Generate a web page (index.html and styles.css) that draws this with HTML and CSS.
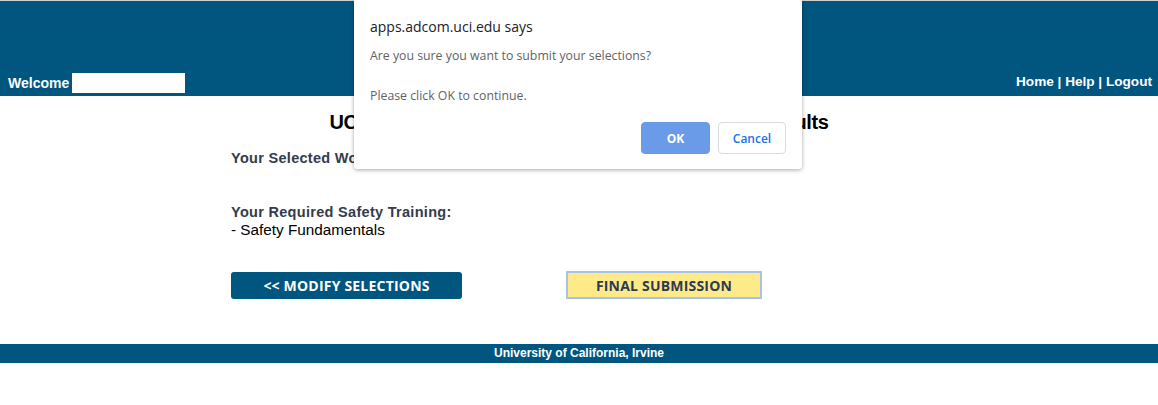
FILE: index.html
```html
<!DOCTYPE html>
<html>
<head>
<meta charset="utf-8">
<link rel="stylesheet" href="styles.css">
</head>
<body>
<div class="topline"></div>
<header class="header">
  <div class="welcome">Welcome <span class="namebox"></span></div>
  <nav class="nav">Home | Help | Logout</nav>
</header>
<main class="main">
  <h1 class="title">UCI Student Work Activity Hazard Assessment Results</h1>
  <div class="content">
    <div class="label">Your Selected Work Activities:</div>
    <div class="section">
      <div class="label">Your Required Safety Training:</div>
      <div class="item">- Safety Fundamentals</div>
    </div>
    <div class="buttons">
      <button class="btn btn-modify">&lt;&lt; MODIFY SELECTIONS</button>
      <button class="btn btn-submit">FINAL SUBMISSION</button>
    </div>
  </div>
</main>
<footer class="footer">University of California, Irvine</footer>

<div class="dialog">
  <div class="dlg-title">apps.adcom.uci.edu says</div>
  <div class="dlg-msg">Are you sure you want to submit your selections?</div>
  <div class="dlg-msg dlg-msg2">Please click OK to continue.</div>
  <div class="dlg-actions">
    <button class="dbtn dbtn-ok">OK</button>
    <button class="dbtn dbtn-cancel">Cancel</button>
  </div>
</div>
</body>
</html>
```
FILE: styles.css
```css
html, body { margin: 0; padding: 0; background: #fff; }
body { font-family: "Liberation Sans", Arial, sans-serif; position: relative; }
.topline { height: 1px; background: #d0d0d0; }
.header {
  background: #00567f;
  height: 92px;
  display: flex;
  justify-content: space-between;
  align-items: flex-end;
  padding: 0 6px 3px 8px;
  color: #fff;
  font-weight: bold;
  font-size: 14px;
}
.welcome { display: flex; align-items: center; gap: 3px; line-height: 20px; }
.namebox { display: inline-block; width: 113px; height: 20px; background: #fff; }
.nav { line-height: 20px; padding-bottom: 1px; font-size: 13.6px; }
.main { padding-top: 13px; }
.title {
  margin: 0;
  text-align: center;
  font-size: 20px;
  font-weight: bold;
  color: #000;
  line-height: 26px;
  letter-spacing: -0.4px;
}
.content { width: 696px; margin: 14px auto 0; }
.label { font-size: 14.5px; font-weight: bold; color: #343b4c; letter-spacing: 0.3px; line-height: 18px; }
.section { margin-top: 36px; }
.item { font-size: 15.3px; color: #000; line-height: 18px; }
.buttons { display: flex; gap: 104px; margin-top: 32px; align-items: center; }
.btn {
  font-family: "Open Sans", sans-serif;
  font-weight: bold;
  font-size: 14px;
  letter-spacing: 0.2px;
  border-radius: 3px;
  padding: 0;
  height: 27px;
  cursor: pointer;
}
.btn-modify { width: 231px; background: #00567f; color: #fff; border: none; }
.btn-submit { width: 196px; height: 28px; background: #ffea8a; color: #2e3a54; border: 2px solid #a9c3e6; border-radius: 0; }
.footer {
  margin-top: 45px;
  background: #00567f;
  color: #fff;
  font-size: 12px;
  font-weight: bold;
  text-align: center;
  height: 19px;
  line-height: 19px;
}
.dialog {
  position: absolute;
  left: 354px;
  top: 0;
  width: 448px;
  height: 169px;
  background: #fff;
  box-shadow: 0 1px 4px rgba(0,0,0,0.35);
  border-radius: 0 0 3px 3px;
  font-family: "Open Sans", "Noto Sans", sans-serif;
  box-sizing: border-box;
  padding: 17px 16px 0;
}
.dlg-title { font-size: 14px; color: #202124; line-height: 20px; }
.dlg-msg { font-size: 12.3px; color: #5f6368; margin-top: 10px; line-height: 17px; }
.dlg-msg2 { margin-top: 23px; }
.dlg-actions { display: flex; justify-content: flex-end; gap: 8px; margin-top: 18px; }
.dbtn { font-family: "Open Sans", sans-serif; font-size: 12px; height: 32px; border-radius: 4px; padding: 0; }
.dbtn-ok { width: 69px; background: #6a9be8; color: #fff; border: 1px solid #6a9be8; font-weight: bold; }
.dbtn-cancel { width: 68px; background: #fff; color: #1a73e8; border: 1px solid #dadce0; font-weight: 600; }
```
